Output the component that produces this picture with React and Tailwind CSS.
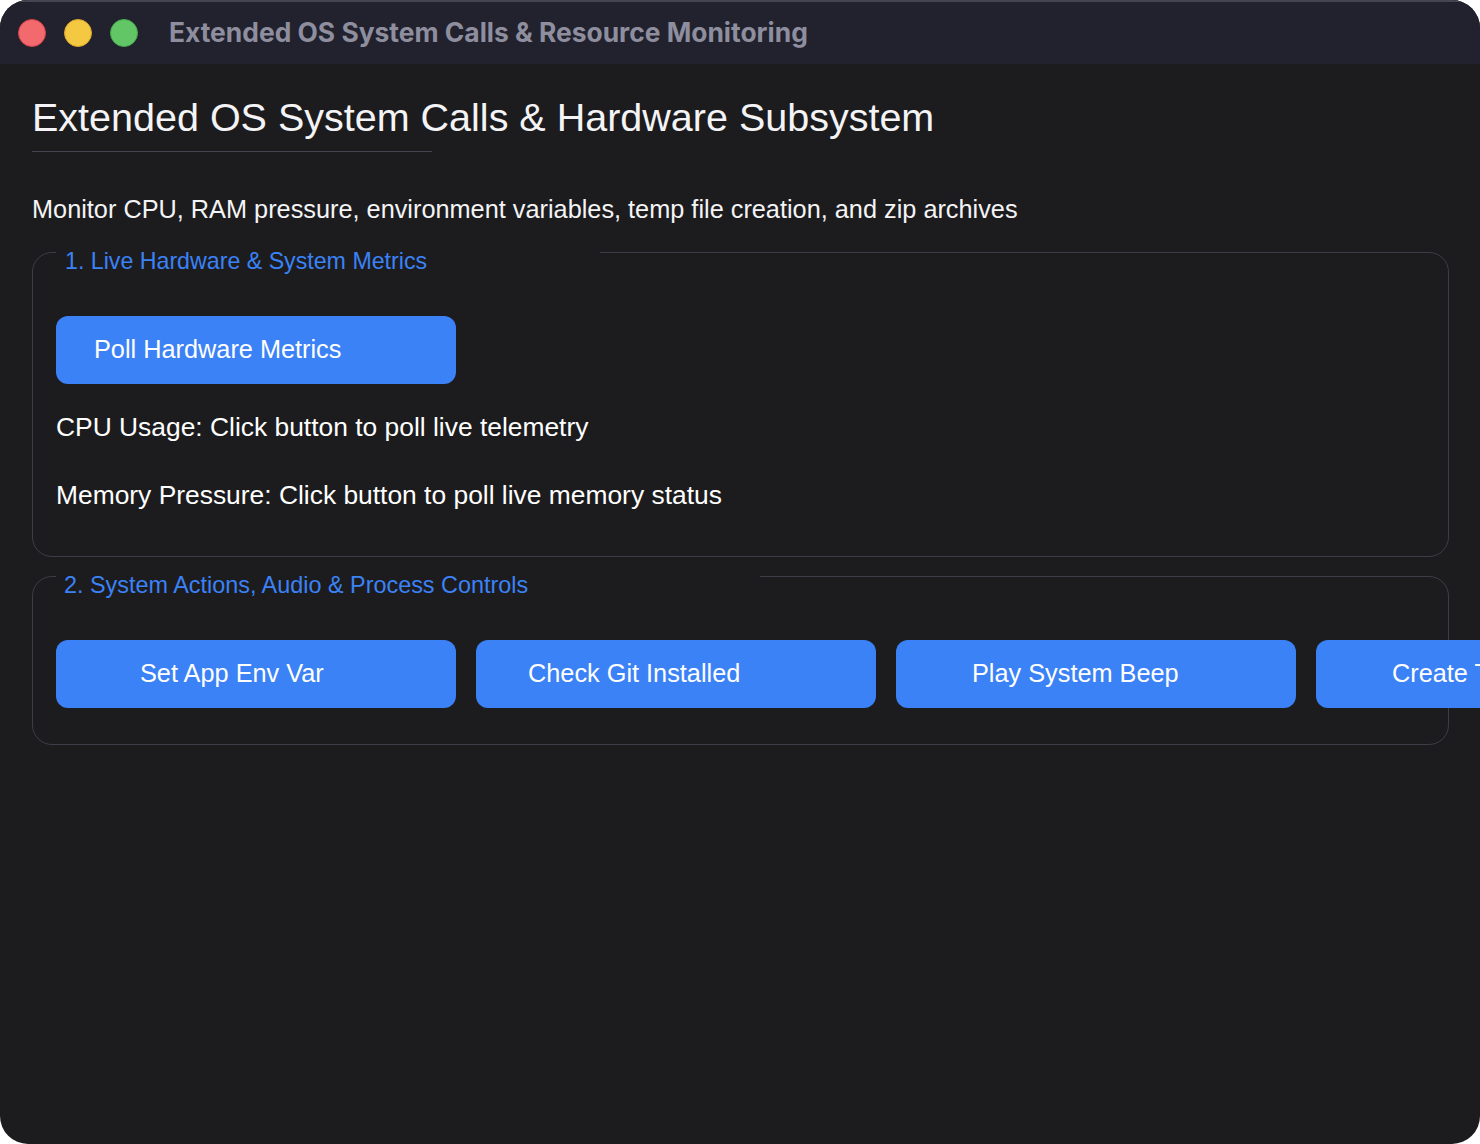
const sans = "font-['Liberation_Sans',Arial,sans-serif]";

function Button({ label, pad }) {
  return (
    <button className={`h-[68px] w-[400px] shrink-0 rounded-xl bg-[#3b82f6] pb-0.5 text-left text-[25.3px] leading-[66px] text-white whitespace-nowrap ${pad}`}>
      {label}
    </button>
  );
}

function Group({ title, legendClass, body }) {
  return (
    <fieldset className="min-w-0 rounded-[20px] border border-[#3d3d47] px-[23px]">
      <legend className={`h-9 pt-[18px] leading-[18px] text-[#3b82f6] whitespace-nowrap ${legendClass}`}>
        {title}
      </legend>
      {body}
    </fieldset>
  );
}

export default function App() {
  return (
    <div className={`${sans} h-[1144px] w-[1480px] overflow-hidden bg-white`}>
      <div className="h-full overflow-hidden rounded-[28px] bg-[#1c1c1e]">
        {/* Title bar */}
        <div className="flex h-16 items-center border-t-2 border-[#44454f] bg-[#21222e] pl-[18px]">
          <span className="h-7 w-7 rounded-full border border-[#d9434a] bg-[#f26a6e]" />
          <span className="ml-[18px] h-7 w-7 rounded-full border border-[#d9a52c] bg-[#f5c842]" />
          <span className="ml-[18px] h-7 w-7 rounded-full border border-[#45ad4d] bg-[#62c666]" />
          <span className="ml-[31px] font-['Inter',sans-serif] text-[26.4px] font-bold text-[#8e8e9e] whitespace-nowrap">
            Extended OS System Calls &amp; Resource Monitoring
          </span>
        </div>

        <div className="pl-8 pr-[31px]">
          <h1 className="h-[88px] w-[400px] border-b border-[#44444e] pt-[29px] text-[39.5px] leading-[48px] text-[#f4f4f6] whitespace-nowrap">
            Extended OS System Calls &amp; Hardware Subsystem
          </h1>
          <p className="mt-[42px] text-[25.3px] leading-[30px] text-[#f4f4f6] whitespace-nowrap">
            Monitor CPU, RAM pressure, environment variables, temp file creation, and zip archives
          </p>

          <div className="mt-2.5 flex flex-col gap-px">
            <Group
              title="1. Live Hardware & System Metrics"
              legendClass="w-[544px] pl-[9px] text-[23.2px]"
              body={
                <div className="pt-[46px] pb-[44px]">
                  <Button label="Poll Hardware Metrics" pad="pl-[38px]" />
                  <p className="mt-[26px] text-[26.4px] leading-[34px] text-white">CPU Usage: Click button to poll live telemetry</p>
                  <p className="mt-[34px] text-[26.4px] leading-[34px] text-white">Memory Pressure: Click button to poll live memory status</p>
                </div>
              }
            />
            <Group
              title="2. System Actions, Audio & Process Controls"
              legendClass="w-[704px] pl-2 text-[23.4px]"
              body={
                <div className="flex gap-5 pt-[46px] pb-9">
                  <Button label="Set App Env Var" pad="pl-[84px]" />
                  <Button label="Check Git Installed" pad="pl-[52px]" />
                  <Button label="Play System Beep" pad="pl-[76px]" />
                  <Button label="Create Temp File" pad="pl-[76px]" />
                </div>
              }
            />
          </div>
        </div>
      </div>
    </div>
  );
}
